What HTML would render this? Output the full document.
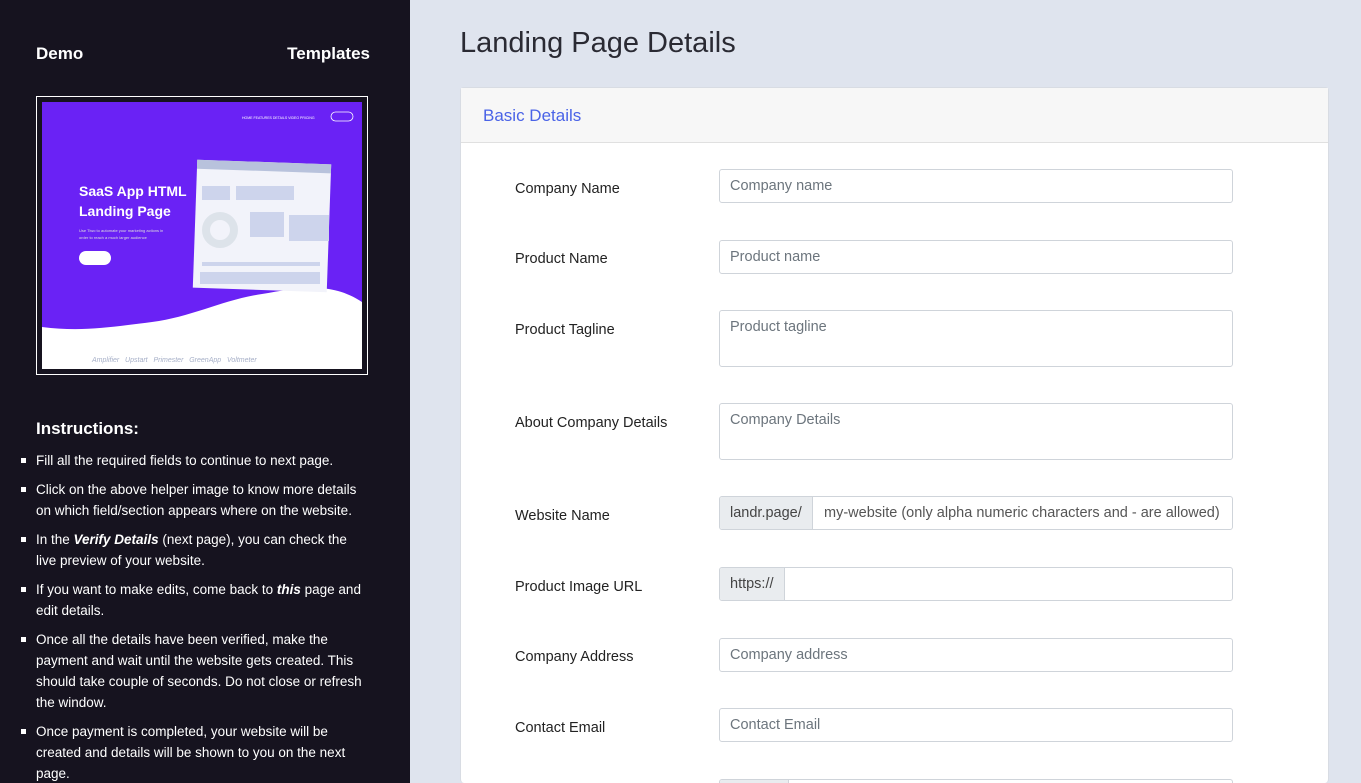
<!DOCTYPE html>
<html style="height:783px;overflow:hidden"><head><meta charset="utf-8"><style>
*{box-sizing:border-box;margin:0;padding:0}
body{width:1361px;height:783px;overflow:hidden;font-family:"Liberation Sans",sans-serif;background:#dfe4ee;position:relative}
.side{position:absolute;left:0;top:0;width:410px;height:783px;background:#16131f;color:#fff}
.side h3{position:absolute;top:44px;font-size:17px;font-weight:bold}
.img{position:absolute;left:36px;top:96px;width:332px;height:279px;border:1px solid #fff;padding:5px}
.ins{position:absolute;left:36px;top:419px;font-size:17px;font-weight:bold}
ul{position:absolute;left:36px;top:450px;width:330px;list-style:none;font-size:13.5px;line-height:21px}
li{position:relative;margin-bottom:8px}
li:before{content:"";position:absolute;left:-15px;top:8px;width:5px;height:5px;background:#fff}
h1{position:absolute;left:460px;top:27px;font-size:29px;font-weight:normal;color:#2a2a33}
.card{position:absolute;left:460px;top:87px;width:869px;height:720px;background:#fff;border:1px solid #d8dce3;border-radius:4px}
.ch{height:55px;background:#f7f7f7;border-bottom:1px solid #e0e0e0;color:#4a63e7;font-size:17px;padding:18px 22px}
.lb{position:absolute;left:515px;font-size:14.5px;color:#222}
.in{position:absolute;left:719px;width:514px;height:34px;border:1px solid #cfd4da;border-radius:3px;background:#fff;font-size:14.5px;color:#6c757d;padding:8px 10px;white-space:nowrap;overflow:hidden}
.pre{position:absolute;left:0;top:0;bottom:0;background:#e9ecef;border-right:1px solid #cfd4da;color:#444;padding:8px 10px}
</style></head><body>
<div class="side">
<h3 style="left:36px">Demo</h3><h3 style="right:40px">Templates</h3>
<div class="img"><svg width="320" height="267" viewBox="0 0 320 267">
<rect width="320" height="267" fill="#fff"/>
<path d="M0 0H320V200C290 180 260 185 220 192C180 198 150 215 110 220C70 225 40 230 0 225Z" fill="#6a22f5"/>
<rect x="153" y="60" width="134" height="128" fill="#f2f3fa" transform="rotate(2 220 124)"/>
<rect x="153" y="60" width="134" height="9" fill="#b8c2dc" transform="rotate(2 220 124)"/>
<circle cx="178" cy="128" r="14" fill="none" stroke="#dde3ea" stroke-width="8"/>
<rect x="208" y="110" width="34" height="25" fill="#cdd4ec"/><rect x="247" y="113" width="40" height="26" fill="#cdd4ec"/>
<rect x="160" y="84" width="28" height="14" fill="#cdd4ec"/><rect x="194" y="84" width="58" height="14" fill="#cdd4ec"/>
<rect x="160" y="160" width="118" height="4" fill="#cdd4ec"/><rect x="158" y="170" width="120" height="12" fill="#cdd4ec"/>
<text x="37" y="94" fill="#fff" font-size="14" font-weight="bold">SaaS App HTML</text>
<text x="37" y="114" fill="#fff" font-size="14" font-weight="bold">Landing Page</text>
<text x="37" y="130" fill="#ddd" font-size="4">Use Tiwo to automate your marketing actions in</text>
<text x="37" y="137" fill="#ddd" font-size="4">order to reach a much larger audience</text>
<rect x="37" y="149" width="32" height="14" rx="7" fill="#fff"/>
<text x="200" y="17" fill="#fff" font-size="3.5">HOME FEATURES DETAILS VIDEO PRICING</text>
<rect x="289" y="10" width="22" height="9" rx="4.5" fill="none" stroke="#fff" stroke-width=".8"/>
<text x="50" y="260" fill="#a7b0c8" font-size="7" font-style="italic">Amplifier  &#160;  Upstart  &#160;  Primester  &#160;  GreenApp  &#160;  Voltmeter</text>
</svg></div>
<div class="ins">Instructions:</div>
<ul>
<li>Fill all the required fields to continue to next page.</li>
<li>Click on the above helper image to know more details on which field/section appears where on the website.</li>
<li>In the <b><i>Verify Details</i></b> (next page), you can check the live preview of your website.</li>
<li>If you want to make edits, come back to <b><i>this</i></b> page and edit details.</li>
<li>Once all the details have been verified, make the payment and wait until the website gets created. This should take couple of seconds. Do not close or refresh the window.</li>
<li>Once payment is completed, your website will be created and details will be shown to you on the next page.</li>
</ul>
</div>
<h1>Landing Page Details</h1>
<div class="card" style="height:696px;border-bottom:none"><div class="ch">Basic Details</div></div>
<div class="lb" style="top:181px">Company Name</div><div class="in" style="top:169px">Company name</div>
<div class="lb" style="top:251px">Product Name</div><div class="in" style="top:240px">Product name</div>
<div class="lb" style="top:322px">Product Tagline</div><div class="in" style="top:310px;height:57px">Product tagline</div>
<div class="lb" style="top:415px">About Company Details</div><div class="in" style="top:403px;height:57px">Company Details</div>
<div class="lb" style="top:508px">Website Name</div><div class="in" style="top:496px;padding-left:104px;color:#555"><span class="pre">landr.page/</span>my-website (only alpha numeric characters and - are allowed)</div>
<div class="lb" style="top:579px">Product Image URL</div><div class="in" style="top:567px"><span class="pre">https://</span></div>
<div class="lb" style="top:649px">Company Address</div><div class="in" style="top:638px">Company address</div>
<div class="lb" style="top:720px">Contact Email</div><div class="in" style="top:708px">Contact Email</div>
<div class="in" style="top:779px;height:4px;border-bottom:none;border-radius:3px 3px 0 0"><span class="pre" style="width:69px"></span></div>
</body></html>
